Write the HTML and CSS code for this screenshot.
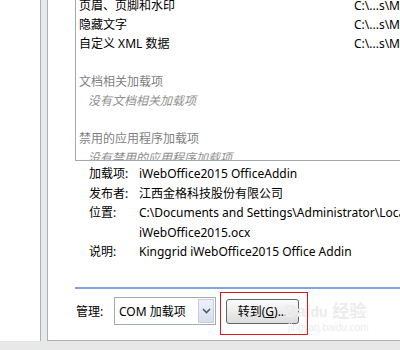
FILE: index.html
```html
<!DOCTYPE html>
<html lang="zh-CN">
<head>
  <meta charset="UTF-8">
  <title>加载项</title>
  <link rel="stylesheet" href="styles.css">
</head>
<body>
  <div class="frame">
    <div class="side"></div>
    <div class="gutter"></div>
    <div class="main">
      <div class="list">
        <div class="list-inner">
          <div class="row"><span class="name">页眉、页脚和水印</span><span class="path">C:\...s\M</span></div>
          <div class="row"><span class="name">隐藏文字</span><span class="path">C:\...s\M</span></div>
          <div class="row"><span class="name">自定义 XML 数据</span><span class="path">C:\...s\M</span></div>
          <div class="row"></div>
          <div class="row group">文档相关加载项</div>
          <div class="row empty">没有文档相关加载项</div>
          <div class="row"></div>
          <div class="row group">禁用的应用程序加载项</div>
          <div class="row empty">没有禁用的应用程序加载项</div>
        </div>
      </div>

      <div class="details">
        <div class="drow"><span class="dlabel">加载项:</span><span class="dval">iWebOffice2015 OfficeAddin</span></div>
        <div class="drow"><span class="dlabel">发布者:</span><span class="dval">江西金格科技股份有限公司</span></div>
        <div class="drow"><span class="dlabel">位置:</span><span class="dval">C:\Documents and Settings\Administrator\Local Settings</span></div>
        <div class="drow"><span class="dlabel"></span><span class="dval">iWebOffice2015.ocx</span></div>
        <div class="drow"><span class="dlabel">说明:</span><span class="dval">Kinggrid iWebOffice2015 Office Addin</span></div>
      </div>

      <div class="sep"></div>

      <div class="manage">
        <span class="mlabel">管理:</span>
        <div class="select">
          <span class="select-text">COM 加载项</span>
          <span class="select-arrow">
            <svg width="9" height="6" viewBox="0 0 9 6"><path d="M1 1 L4.5 4.5 L8 1" fill="none" stroke="#4d5a6e" stroke-width="1.6"/></svg>
          </span>
        </div>
        <button class="go">转到(<u>G</u>)...</button>
      </div>

      <div class="watermark">
        <div class="wm-logo">Bai<span class="wm-du">du</span> 经验</div>
        <div class="wm-url">jingyan.baidu.com</div>
      </div>
      <div class="highlight"></div>
    </div>
  </div>
</body>
</html>
```

FILE: styles.css
```css
body {
  margin: 0;
  width: 400px;
  height: 350px;
  overflow: hidden;
  background-color: #e8e8e8;
  font-family: "Noto Sans", "Noto Sans CJK SC", sans-serif;
  font-size: 12px;
  color: #000;
}

.frame {
  display: flex;
  height: 341px;
}

.side {
  width: 40px;
  background-color: white;
  border-right: 1px solid #a7b1bf;
}

.gutter {
  width: 6px;
  background-color: #e8e8e8;
}

.main {
  position: relative;
  flex: 1;
  background-color: white;
  border-left: 1px solid #a7b1bf;
  border-bottom: 1px solid #a7b1bf;
  padding-left: 27px;
  overflow: hidden;
}

.list {
  height: 160px;
  border-left: 1px solid #a5abb3;
  border-bottom: 1px solid #a5abb3;
  overflow: hidden;
}

.list-inner {
  margin-top: -4px;
  padding-left: 3px;
}

.row {
  height: 19px;
  line-height: 19px;
  display: flex;
  white-space: nowrap;
}

.name {
  width: 275px;
}

.group {
  color: #7f7f7f;
}

.empty {
  color: #8f8f8f;
  font-style: italic;
  padding-left: 9px;
}

.details {
  padding-top: 3px;
  padding-left: 14px;
  height: 123px;
}

.drow {
  height: 19.5px;
  line-height: 19.5px;
  display: flex;
  white-space: nowrap;
}

.dlabel {
  width: 50px;
  flex-shrink: 0;
}

.sep {
  height: 2px;
  background-color: #7fa5de;
}

.manage {
  display: flex;
  align-items: center;
  margin-top: 8px;
}

.mlabel {
  width: 38px;
  padding-left: 1px;
}

.select {
  display: flex;
  align-items: center;
  width: 100px;
  height: 26px;
  border: 1px solid #a5abb3;
  background-color: white;
}

.select-text {
  flex: 1;
  padding-left: 4px;
}

.select-arrow {
  display: flex;
  align-items: center;
  justify-content: center;
  width: 16px;
  height: 24px;
  margin-right: 1px;
  background: linear-gradient(#eef1f8, #d7deec);
  border: 1px solid #c5cfe0;
  box-sizing: border-box;
}

.go {
  width: 73px;
  height: 25px;
  margin-left: 10px;
  padding: 0;
  font: inherit;
  color: #000;
  border: 1px solid #5c6570;
  border-radius: 3px;
  background: linear-gradient(#fbfbfb, #ececec 50%, #dcdcdc);
}

.highlight {
  position: absolute;
  left: 172px;
  top: 292px;
  width: 86px;
  height: 41px;
  border: 1px solid #e01818;
}

.watermark {
  position: absolute;
  left: 236px;
  top: 302px;
  color: #ececec;
  font-family: "Liberation Sans", "Noto Sans CJK SC", sans-serif;
  white-space: nowrap;
  pointer-events: none;
}

.wm-logo {
  font-size: 17px;
  font-weight: bold;
  line-height: 20px;
}

.wm-du {
  font-size: 14px;
}

.wm-url {
  font-size: 10px;
  line-height: 12px;
  padding-left: 4px;
}
```
